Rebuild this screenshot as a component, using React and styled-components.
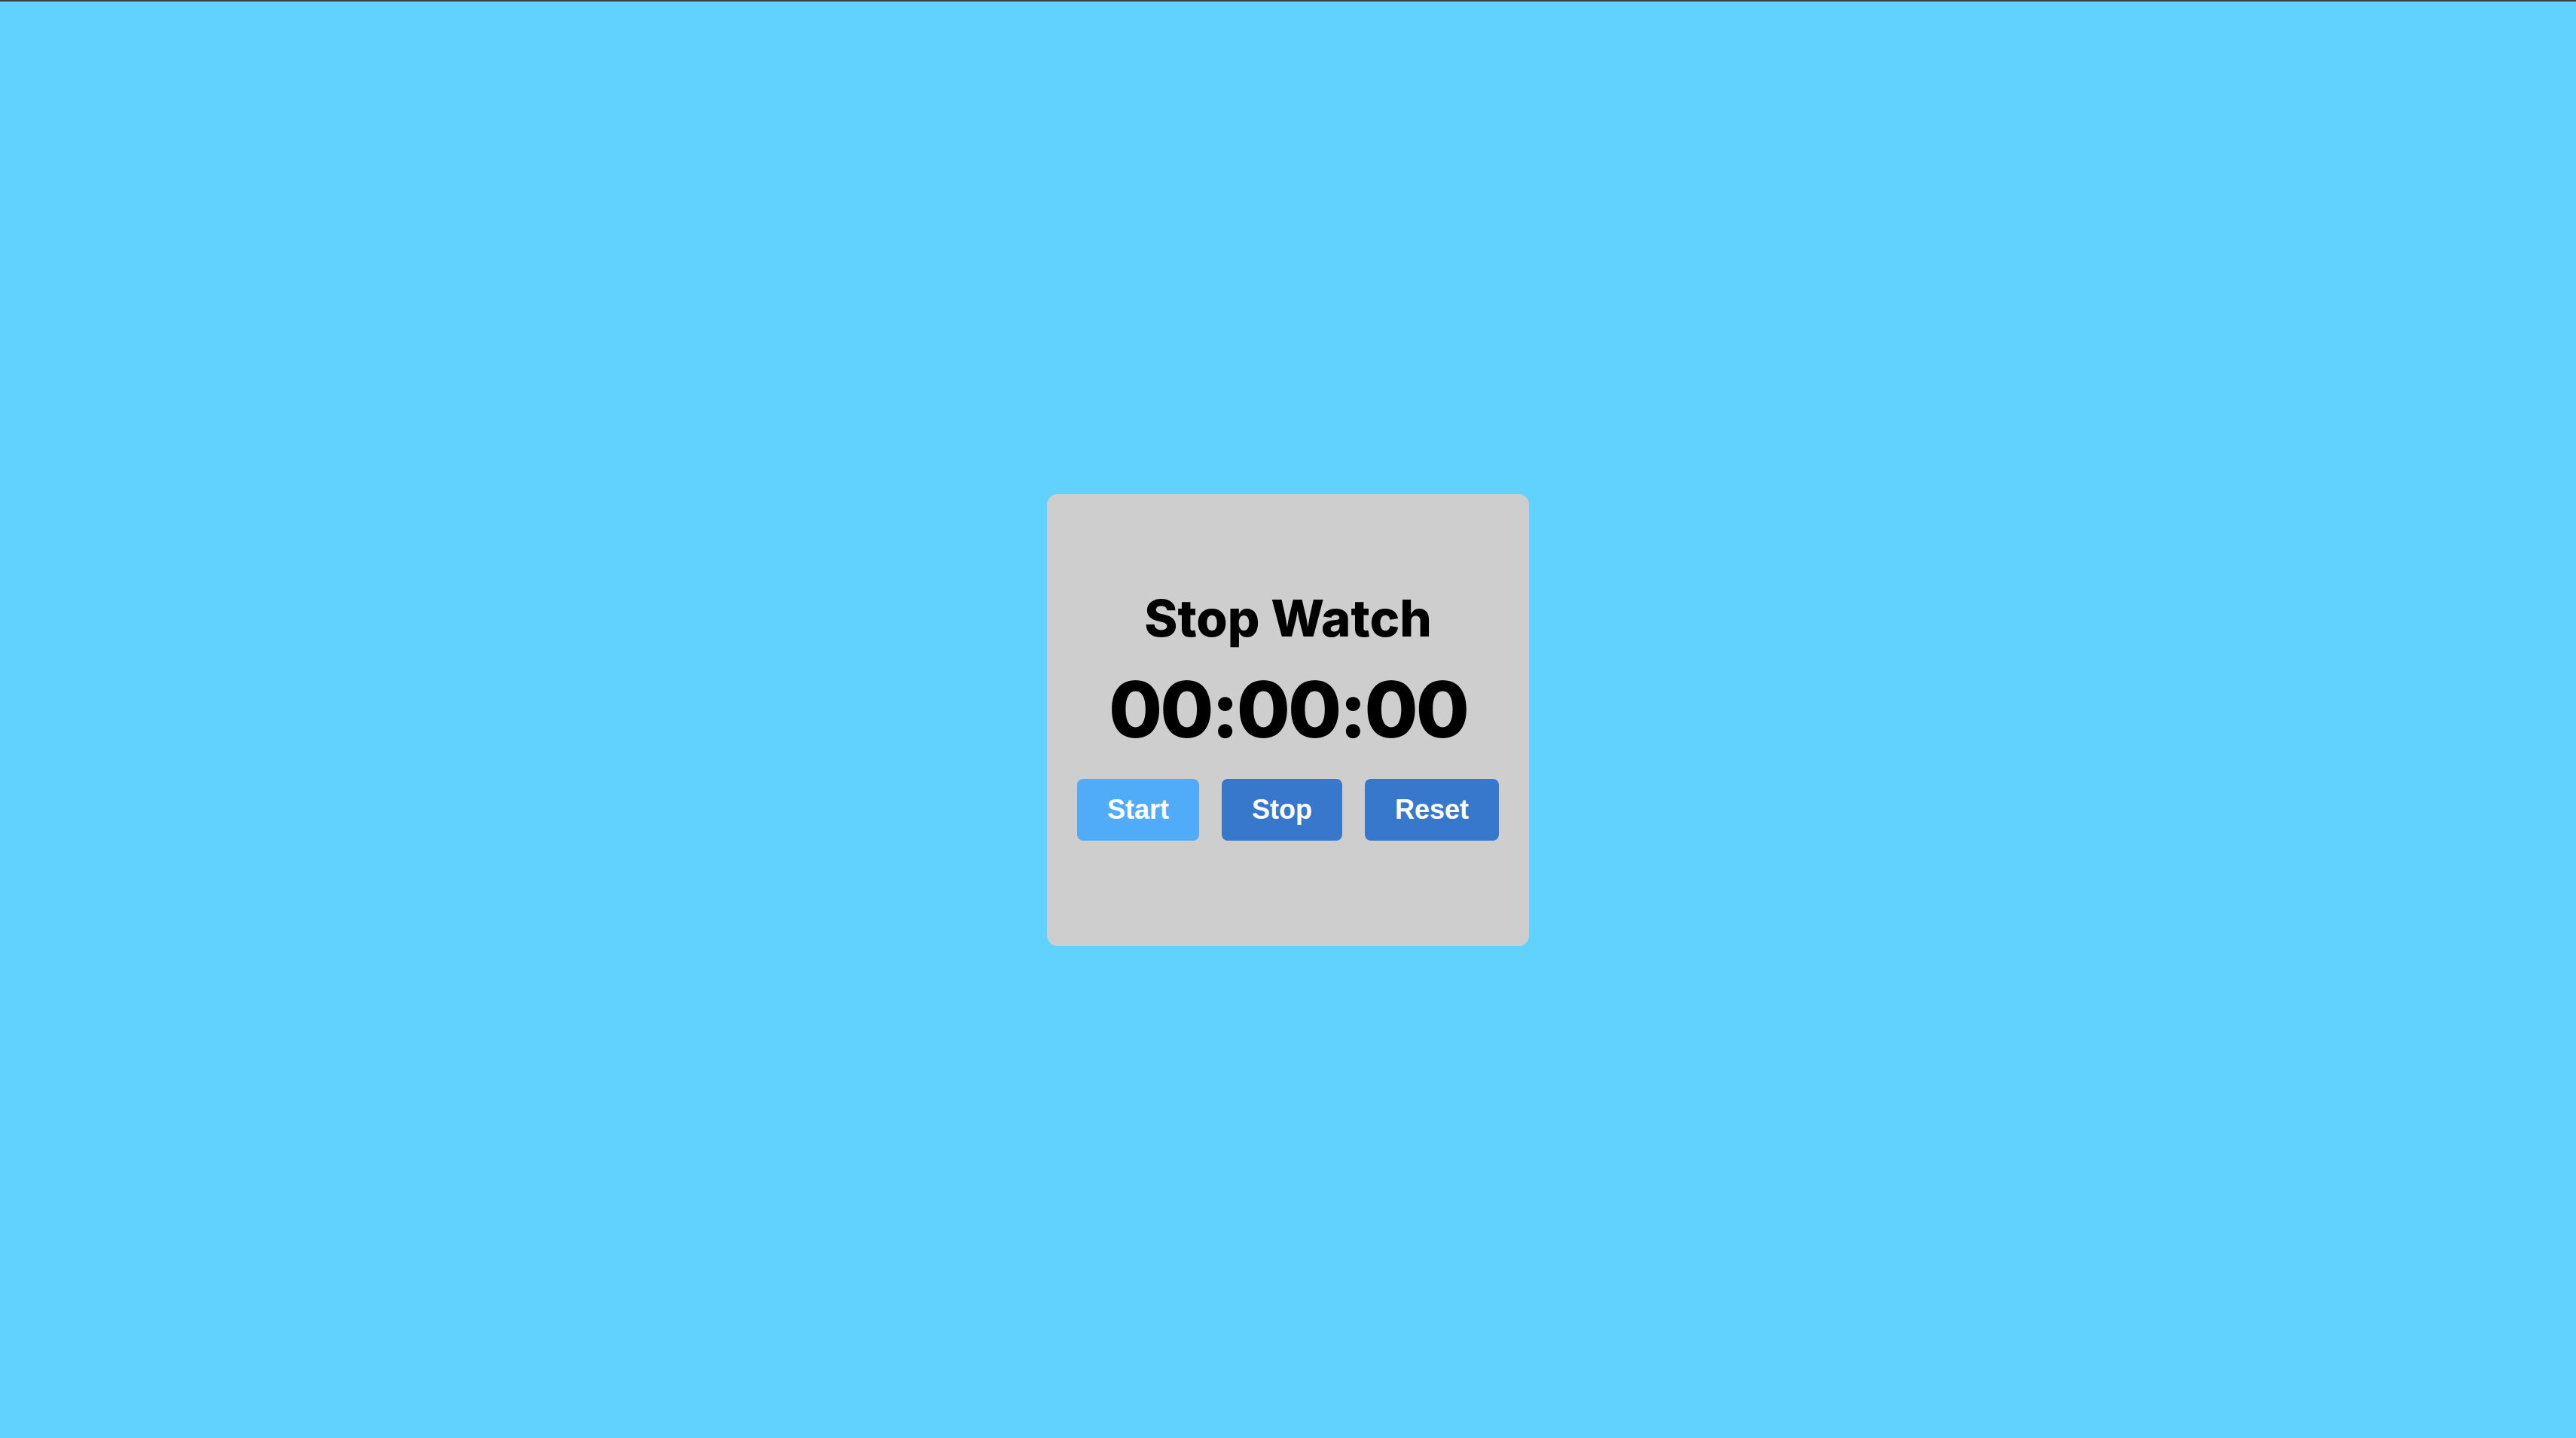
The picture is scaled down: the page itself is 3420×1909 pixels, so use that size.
import styled, { createGlobalStyle } from "styled-components";

const GlobalStyle = createGlobalStyle`
  html, body {
    margin: 0;
    padding: 0;
  }
  body {
    background: #61d1fd;
    border-top: 2px solid #3a3f44;
    font-family: "Liberation Sans", Arial, sans-serif;
  }
`;

const Page = styled.div`
  display: flex;
  align-items: center;
  justify-content: center;
  min-height: 1907px;
`;

const Card = styled.div`
  display: flex;
  flex-direction: column;
  align-items: center;
  justify-content: center;
  width: 640px;
  height: 600px;
  box-sizing: border-box;
  padding-bottom: 8px;
  background: #cecece;
  border-radius: 14px;
`;

const Title = styled.h1`
  margin: 0;
  font-family: "Inter", "Open Sans", sans-serif;
  font-weight: 800;
  font-size: 67px;
  line-height: 1;
  color: #000;
`;

const Time = styled.div`
  margin-top: 31px;
  font-family: "Inter", "Open Sans", sans-serif;
  font-weight: 800;
  font-size: 103px;
  letter-spacing: -3px;
  line-height: 1.1;
  color: #000;
`;

const Controls = styled.div`
  display: flex;
  gap: 30px;
  margin-top: 36px;
`;

const Button = styled.button`
  padding: 20px 40px;
  border: none;
  border-radius: 8px;
  background: ${(p) => (p.$light ? "#50acf8" : "#3778cc")};
  color: #fff;
  font-family: "Liberation Sans", Arial, sans-serif;
  font-weight: 700;
  font-size: 36px;
  cursor: pointer;
`;

const App = () => {
  return (
    <>
      <GlobalStyle />
      <Page>
        <Card>
          <Title>Stop Watch</Title>
          <Time>00:00:00</Time>
          <Controls>
            <Button $light>Start</Button>
            <Button>Stop</Button>
            <Button>Reset</Button>
          </Controls>
        </Card>
      </Page>
    </>
  );
};

export default App;
